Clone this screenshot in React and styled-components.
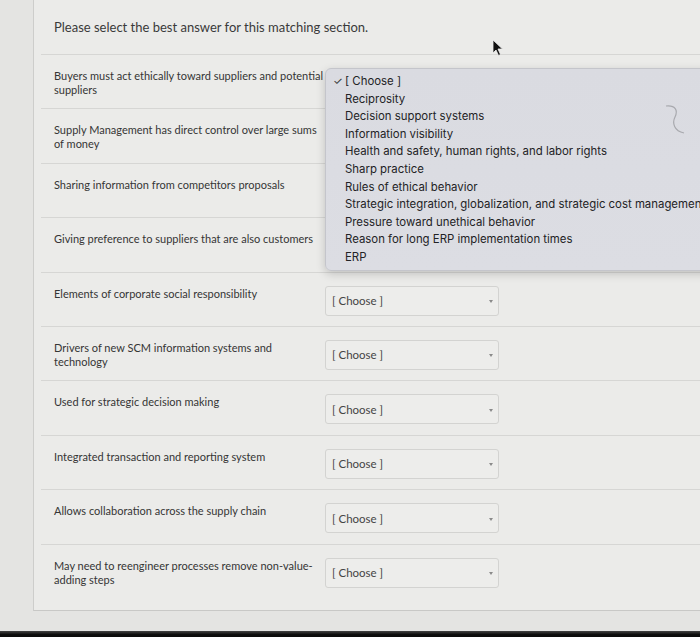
import React from "react";
import styled, { createGlobalStyle } from "styled-components";

const GlobalStyle = createGlobalStyle`
  html, body { margin: 0; padding: 0; }
  body {
    background: #e5e5e3;
    overflow: hidden;
    font-family: Lato, "Open Sans", sans-serif;
  }
`;

const Page = styled.div`
  position: relative;
  width: 700px;
  height: 637px;
  display: flex;
  flex-direction: column;
  overflow: hidden;
  background: #e4e4e2;
`;

const Screen = styled.div`
  flex: 1;
  padding-left: 33px;
`;

const Quiz = styled.div`
  background: #ebebe9;
  border-left: 1px solid #cdcdcb;
  border-bottom: 1px solid #c8c8c6;
  padding: 19px 0 12px 0;
`;

const Title = styled.div`
  font-size: 13px;
  line-height: 16px;
  color: #3a3a3a;
  padding-left: 20px;
  margin-bottom: 19px;
`;

const Row = styled.div`
  position: relative;
  display: flex;
  align-items: flex-start;
  margin-left: 7px;
  padding: 13px 0 0 13px;
  box-sizing: border-box;
  height: 54.4px;
  border-top: 1px solid #d6d6d4;
`;

const Label = styled.div`
  width: 271px;
  flex: none;
  font-size: 11px;
  line-height: 14px;
  color: #353535;
  padding-top: 1px;
`;

const Select = styled.div`
  width: 174px;
  height: 30px;
  box-sizing: border-box;
  border: 1px solid #d3d3d1;
  border-radius: 3px;
  background: #ededeb;
  display: flex;
  align-items: center;
  justify-content: space-between;
  padding: 0 5px 0 6px;
  font-size: 11.5px;
  color: #444;
`;

const Chevron = styled.span`
  width: 0;
  height: 0;
  border-left: 2px solid transparent;
  border-right: 2px solid transparent;
  border-top: 3px solid #8a8a8a;
  margin-top: 2px;
`;

const Menu = styled.div`
  position: absolute;
  left: 284px;
  top: 13px;
  width: 430px;
  height: 203px;
  box-sizing: border-box;
  padding: 4px 0 0 0;
  background: linear-gradient(180deg, #dadbe1 0%, #dcdde3 100%);
  border: 1px solid #c4c5cb;
  border-radius: 6px;
  box-shadow: 0 3px 10px rgba(0, 0, 0, 0.18);
  z-index: 5;
  font-family: Inter, Roboto, sans-serif;
`;

const MenuItem = styled.div`
  position: relative;
  height: 17.6px;
  line-height: 17.6px;
  padding-left: 19px;
  font-size: 11.4px;
  color: #232325;
  white-space: nowrap;
`;

const Check = styled.span`
  position: absolute;
  left: 7px;
  top: 0;
  font-size: 11px;
  color: #333;
`;

const Bezel = styled.div`
  height: 6px;
  background: linear-gradient(180deg, #444 0%, #0c0c0c 60%);
`;

const Cursor = styled.svg`
  position: absolute;
  left: 492px;
  top: 39px;
  z-index: 6;
`;

const Squiggle = styled.svg`
  position: absolute;
  left: 662px;
  top: 103px;
  z-index: 6;
`;

const rows = [
  "Buyers must act ethically toward suppliers and potential suppliers",
  "Supply Management has direct control over large sums of money",
  "Sharing information from competitors proposals",
  "Giving preference to suppliers that are also customers",
  "Elements of corporate social responsibility",
  "Drivers of new SCM information systems and technology",
  "Used for strategic decision making",
  "Integrated transaction and reporting system",
  "Allows collaboration across the supply chain",
  "May need to reengineer processes remove non-value-adding steps",
];

const options = [
  "[ Choose ]",
  "Reciprosity",
  "Decision support systems",
  "Information visibility",
  "Health and safety, human rights, and labor rights",
  "Sharp practice",
  "Rules of ethical behavior",
  "Strategic integration, globalization, and strategic cost management",
  "Pressure toward unethical behavior",
  "Reason for long ERP implementation times",
  "ERP",
];

export default function App() {
  return (
    <Page>
      <GlobalStyle />
      <Screen>
        <Quiz>
          <Title>Please select the best answer for this matching section.</Title>
          {rows.map((text, i) => (
            <Row key={i}>
              <Label>{text}</Label>
              {i > 3 && (
                <Select>
                  <span>[ Choose ]</span>
                  <Chevron />
                </Select>
              )}
              {i === 0 && (
                <Menu>
                  {options.map((o, j) => (
                    <MenuItem key={j}>
                      {j === 0 && <Check>✓</Check>}
                      {o}
                    </MenuItem>
                  ))}
                </Menu>
              )}
            </Row>
          ))}
        </Quiz>
      </Screen>
      <Bezel />
      <Cursor width="12" height="18" viewBox="0 0 12 18">
        <path d="M1 1 L1 14 L4 11 L6.5 16.5 L8.5 15.5 L6 10 L10.5 10 Z" fill="#111" stroke="#eee" strokeWidth="0.8" />
      </Cursor>
      <Squiggle width="30" height="34" viewBox="0 0 30 34">
        <path d="M4 3 C14 2 16 8 13 14 C10 20 12 28 22 30" fill="none" stroke="#a8a9ae" strokeWidth="1.2" />
      </Squiggle>
    </Page>
  );
}
